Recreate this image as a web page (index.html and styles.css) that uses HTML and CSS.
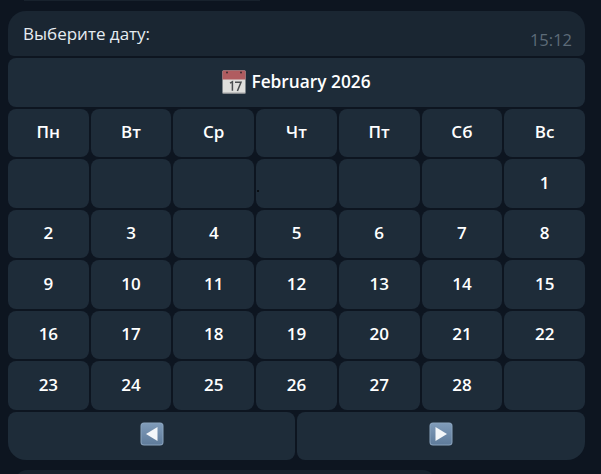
FILE: index.html
```html
<!DOCTYPE html>
<html lang="en">
<head>
<meta charset="UTF-8">
<meta name="viewport" content="width=device-width, initial-scale=1.0">
<title>Выберите дату</title>
<link rel="stylesheet" href="styles.css">
</head>
<body>

<div class="prev-message"></div>

<div class="message">
    <div class="bubble">
        <span class="bubble-text">Выберите дату:</span>
        <span class="bubble-time">15:12</span>
    </div>

    <div class="keyboard">
        <button class="key key-title">
            <svg class="icon-calendar" viewBox="0 0 24 24" width="24" height="24">
                <rect x="0.5" y="0.5" width="23" height="23" rx="1" fill="#dfdfdd"/>
                <path d="M0.5 1.5a1 1 0 0 1 1-1h21a1 1 0 0 1 1 1v8h-23z" fill="#b05c60"/>
                <rect x="0.5" y="22.6" width="23" height="1" fill="#8f9194"/>
                <circle cx="5" cy="2.5" r="1" fill="#3c2a30"/>
                <circle cx="19" cy="2.5" r="1" fill="#3c2a30"/>
                <path d="M8 13.2l2.4-1.4v9" fill="none" stroke="#4a4d50" stroke-width="1.5"/>
                <path d="M13 12.2h6l-3.6 8.8" fill="none" stroke="#4a4d50" stroke-width="1.5"/>
            </svg>
            February 2026
        </button>

        <div class="key">Пн</div>
        <div class="key">Вт</div>
        <div class="key">Ср</div>
        <div class="key">Чт</div>
        <div class="key">Пт</div>
        <div class="key">Сб</div>
        <div class="key">Вс</div>

        <div class="key"></div>
        <div class="key"></div>
        <div class="key"></div>
        <div class="key"><span class="speck"></span></div>
        <div class="key"></div>
        <div class="key"></div>
        <div class="key">1</div>

        <div class="key">2</div>
        <div class="key">3</div>
        <div class="key">4</div>
        <div class="key">5</div>
        <div class="key">6</div>
        <div class="key">7</div>
        <div class="key">8</div>

        <div class="key">9</div>
        <div class="key">10</div>
        <div class="key">11</div>
        <div class="key">12</div>
        <div class="key">13</div>
        <div class="key">14</div>
        <div class="key">15</div>

        <div class="key">16</div>
        <div class="key">17</div>
        <div class="key">18</div>
        <div class="key">19</div>
        <div class="key">20</div>
        <div class="key">21</div>
        <div class="key">22</div>

        <div class="key">23</div>
        <div class="key">24</div>
        <div class="key">25</div>
        <div class="key">26</div>
        <div class="key">27</div>
        <div class="key">28</div>
        <div class="key"></div>

        <div class="nav-row">
            <div class="key key-prev">
                <svg viewBox="0 0 24 24" width="24" height="24">
                    <defs>
                        <linearGradient id="arrowFill" x1="0" y1="0" x2="0" y2="1">
                            <stop offset="0" stop-color="#7f9bb9"/>
                            <stop offset="1" stop-color="#5f7c9b"/>
                        </linearGradient>
                    </defs>
                    <rect x="0.5" y="0.5" width="23" height="23" rx="3.5" fill="#8aa3bd"/>
                    <rect x="1.5" y="1.5" width="21" height="21" rx="2.5" fill="url(#arrowFill)"/>
                    <path d="M6 12L17.5 5v14z" fill="#f3f6f9"/>
                </svg>
            </div>
            <div class="key key-next">
                <svg viewBox="0 0 24 24" width="24" height="24">
                    <rect x="0.5" y="0.5" width="23" height="23" rx="3.5" fill="#8aa3bd"/>
                    <rect x="1.5" y="1.5" width="21" height="21" rx="2.5" fill="url(#arrowFill)"/>
                    <path d="M18 12L6.5 5v14z" fill="#f3f6f9"/>
                </svg>
            </div>
        </div>
    </div>
</div>

<div class="next-message"></div>

</body>
</html>
```

FILE: styles.css
```css
* {
    box-sizing: border-box;
}

html, body {
    height: 100%;
}

body {
    margin: 0;
    background-color: #0d1520;
    font-family: 'Open Sans', sans-serif;
    color: #f5f5f5;
    overflow: hidden;
}

.prev-message {
    width: 236px;
    height: 1px;
    margin-left: 24px;
    background-color: #18222d;
}

.message {
    width: 577px;
    margin: 10px 0 0 8px;
}

.bubble {
    display: flex;
    justify-content: space-between;
    height: 45px;
    padding: 11px 13px 0 15px;
    background-color: #1a2632;
    border-radius: 18px 18px 6px 6px;
}

.bubble-text {
    font-size: 17px;
    line-height: 23px;
    color: #e6ecf1;
}

.bubble-time {
    margin-top: 6px;
    font-size: 16.5px;
    line-height: 23px;
    color: #5d6b78;
}

.keyboard {
    display: grid;
    grid-template-columns: repeat(7, 1fr);
    grid-auto-rows: 48.5px;
    gap: 2px;
    margin-top: 2px;
}

.key {
    position: relative;
    display: flex;
    align-items: center;
    justify-content: center;
    padding-bottom: 2px;
    background-color: #1e2c39;
    border-radius: 8px;
    font-size: 17px;
    font-weight: 600;
    color: #fff;
}

.key-title {
    grid-column: 1 / -1;
    gap: 5px;
    border: none;
    font-family: inherit;
    font-size: 17.3px;
}

.nav-row {
    grid-column: 1 / -1;
    display: grid;
    grid-template-columns: 287px 288px;
    gap: 2px;
}

.key-prev {
    padding-bottom: 4px;
    border-bottom-left-radius: 18px;
}

.key-next {
    padding-bottom: 4px;
    border-bottom-right-radius: 18px;
}

/* stray dark dot that sits in the empty cell */
.speck {
    position: absolute;
    left: 1px;
    top: 31px;
    width: 2px;
    height: 2px;
    background-color: #0a0f14;
}

.next-message {
    width: 420px;
    height: 12px;
    margin: 10px 0 0 15px;
    background-color: #17222d;
    border-radius: 12px 12px 0 0;
}
```
